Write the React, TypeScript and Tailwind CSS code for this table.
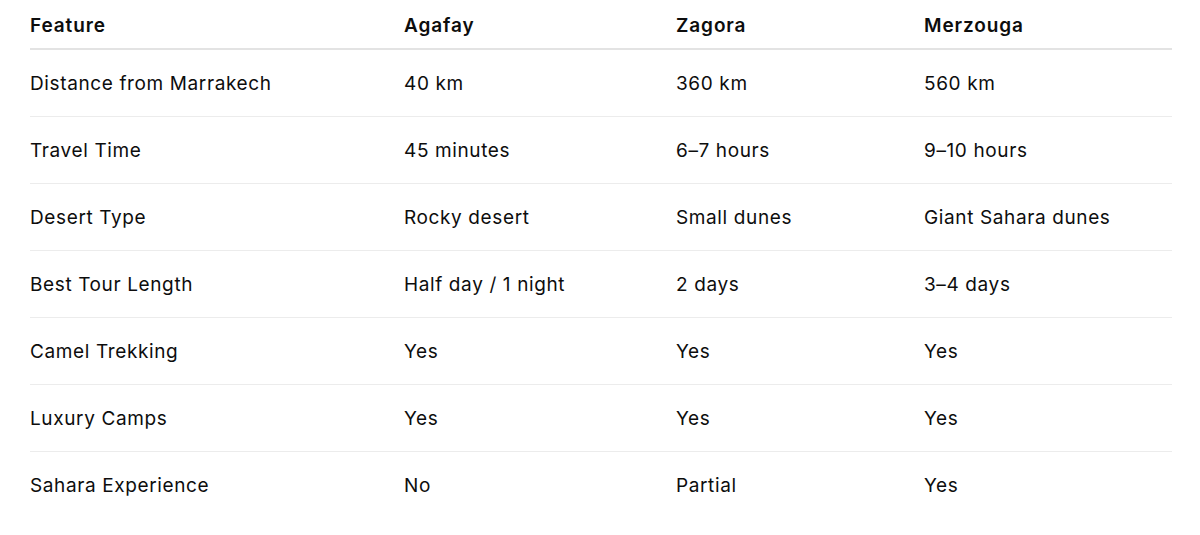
import React from "react";

const headers = ["Feature", "Agafay", "Zagora", "Merzouga"];
const rows = [
  ["Distance from Marrakech", "40 km", "360 km", "560 km"],
  ["Travel Time", "45 minutes", "6–7 hours", "9–10 hours"],
  ["Desert Type", "Rocky desert", "Small dunes", "Giant Sahara dunes"],
  ["Best Tour Length", "Half day / 1 night", "2 days", "3–4 days"],
  ["Camel Trekking", "Yes", "Yes", "Yes"],
  ["Luxury Camps", "Yes", "Yes", "Yes"],
  ["Sahara Experience", "No", "Partial", "Yes"],
];

export default function App() {
  return (
    <div
      className="w-[1200px] h-[535px] bg-white pl-[30px] pr-[28px] text-[#0d0d0d]"
      style={{ fontFamily: "Inter, 'Noto Sans', sans-serif" }}
    >
      <div className="grid grid-cols-[374px_272px_248px_248px] border-b-2 border-[#e3e3e3] pt-[12px] pb-[8px] text-[19px] leading-[28px] font-semibold tracking-[0.9px]">
        {headers.map((h) => (
          <div key={h}>{h}</div>
        ))}
      </div>
      {rows.map((r, i) => (
        <div
          key={i}
          className={
            i < rows.length - 1
              ? "grid grid-cols-[374px_272px_248px_248px] border-b border-[#ececec] pt-[20px] pb-[18px] text-[19px] leading-[28px] tracking-[0.62px]"
              : "grid grid-cols-[374px_272px_248px_248px] pt-[20px] pb-[18px] text-[19px] leading-[28px] tracking-[0.62px]"
          }
        >
          {r.map((c, j) => (
            <div key={j}>{c}</div>
          ))}
        </div>
      ))}
    </div>
  );
}
